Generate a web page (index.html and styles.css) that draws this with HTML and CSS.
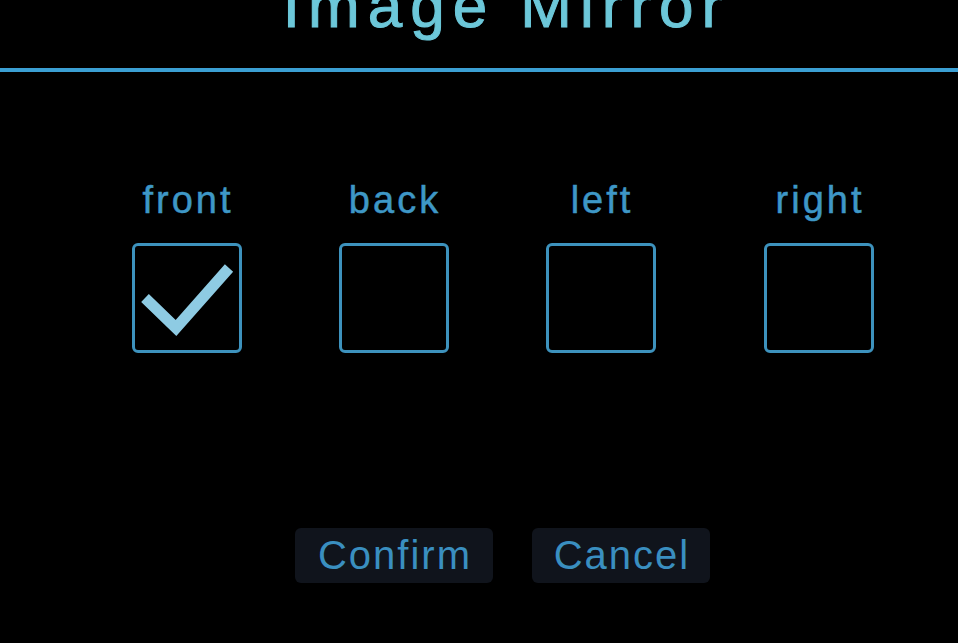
FILE: index.html
```html
<!DOCTYPE html>
<html lang="en">
<head>
  <meta charset="UTF-8" />
  <title>Image Mirror</title>
  <link rel="stylesheet" href="styles.css">
</head>
<body>
  <div class="mirror_page">
    <div class="header">
      <h1 class="title">Image Mirror</h1>
    </div>

    <!-- Mirror options -->
    <div class="options">
      <div class="option">
        <span class="option-label">front</span>
        <div class="check-box checked">
          <svg width="104" height="104" viewBox="0 0 104 104">
            <polyline points="10,52 41,82 94,22" fill="none" stroke="#8ecbe3" stroke-width="11" />
          </svg>
        </div>
      </div>
      <div class="option">
        <span class="option-label">back</span>
        <div class="check-box"></div>
      </div>
      <div class="option">
        <span class="option-label">left</span>
        <div class="check-box"></div>
      </div>
      <div class="option option-last">
        <span class="option-label">right</span>
        <div class="check-box"></div>
      </div>
    </div>

    <div class="actions">
      <button class="btn btn-confirm">Confirm</button>
      <button class="btn btn-cancel">Cancel</button>
    </div>
  </div>
</body>
</html>
```

FILE: styles.css
```css
* {
  margin: 0;
  padding: 0;
  box-sizing: border-box;
  font-family: "Liberation Sans", Arial, sans-serif;
}

body {
  background-color: #000000;
  width: 958px;
  height: 643px;
  overflow: hidden;
}

.mirror_page {
  display: flex;
  flex-direction: column;
}

.header {
  border-bottom: 4px solid #3b9fd3;
  padding-left: 47px;
  padding-bottom: 31px;
}

/* title is cut by the top of the screen, like the device shot */
.title {
  margin-top: -25px;
  font-size: 62px;
  line-height: 62px;
  font-weight: normal;
  letter-spacing: 8px;
  padding-left: 8px;
  text-align: center;
  color: #6cc7d9;
  -webkit-text-stroke: 1px #6cc7d9;
}

.options {
  display: flex;
  justify-content: center;
  gap: 97px;
  padding-left: 47px;
  margin-top: 108px;
}

.option {
  width: 110px;
  display: flex;
  flex-direction: column;
  align-items: center;
  gap: 23px;
}

.option-last {
  margin-left: 11px;
}

.option-label {
  font-size: 38px;
  line-height: 40px;
  letter-spacing: 3px;
  padding-left: 3px;
  color: #3e97c6;
  -webkit-text-stroke: 0.5px #3e97c6;
  white-space: nowrap;
}

.check-box {
  width: 110px;
  height: 110px;
  border: 3px solid #3d92bd;
  border-radius: 6px;
  display: flex;
  align-items: center;
  justify-content: center;
}

.check-box svg {
  display: block;
}

.actions {
  display: flex;
  justify-content: center;
  gap: 39px;
  padding-left: 47px;
  margin-top: 175px;
}

.btn {
  height: 55px;
  line-height: 55px;
  font-size: 40px;
  letter-spacing: 2px;
  padding-left: 2px;
  color: #3a8fc0;
  background-color: #10141c;
  border: none;
  border-radius: 6px;
  cursor: pointer;
}

.btn-confirm {
  width: 198px;
}

.btn-cancel {
  width: 178px;
}
```
